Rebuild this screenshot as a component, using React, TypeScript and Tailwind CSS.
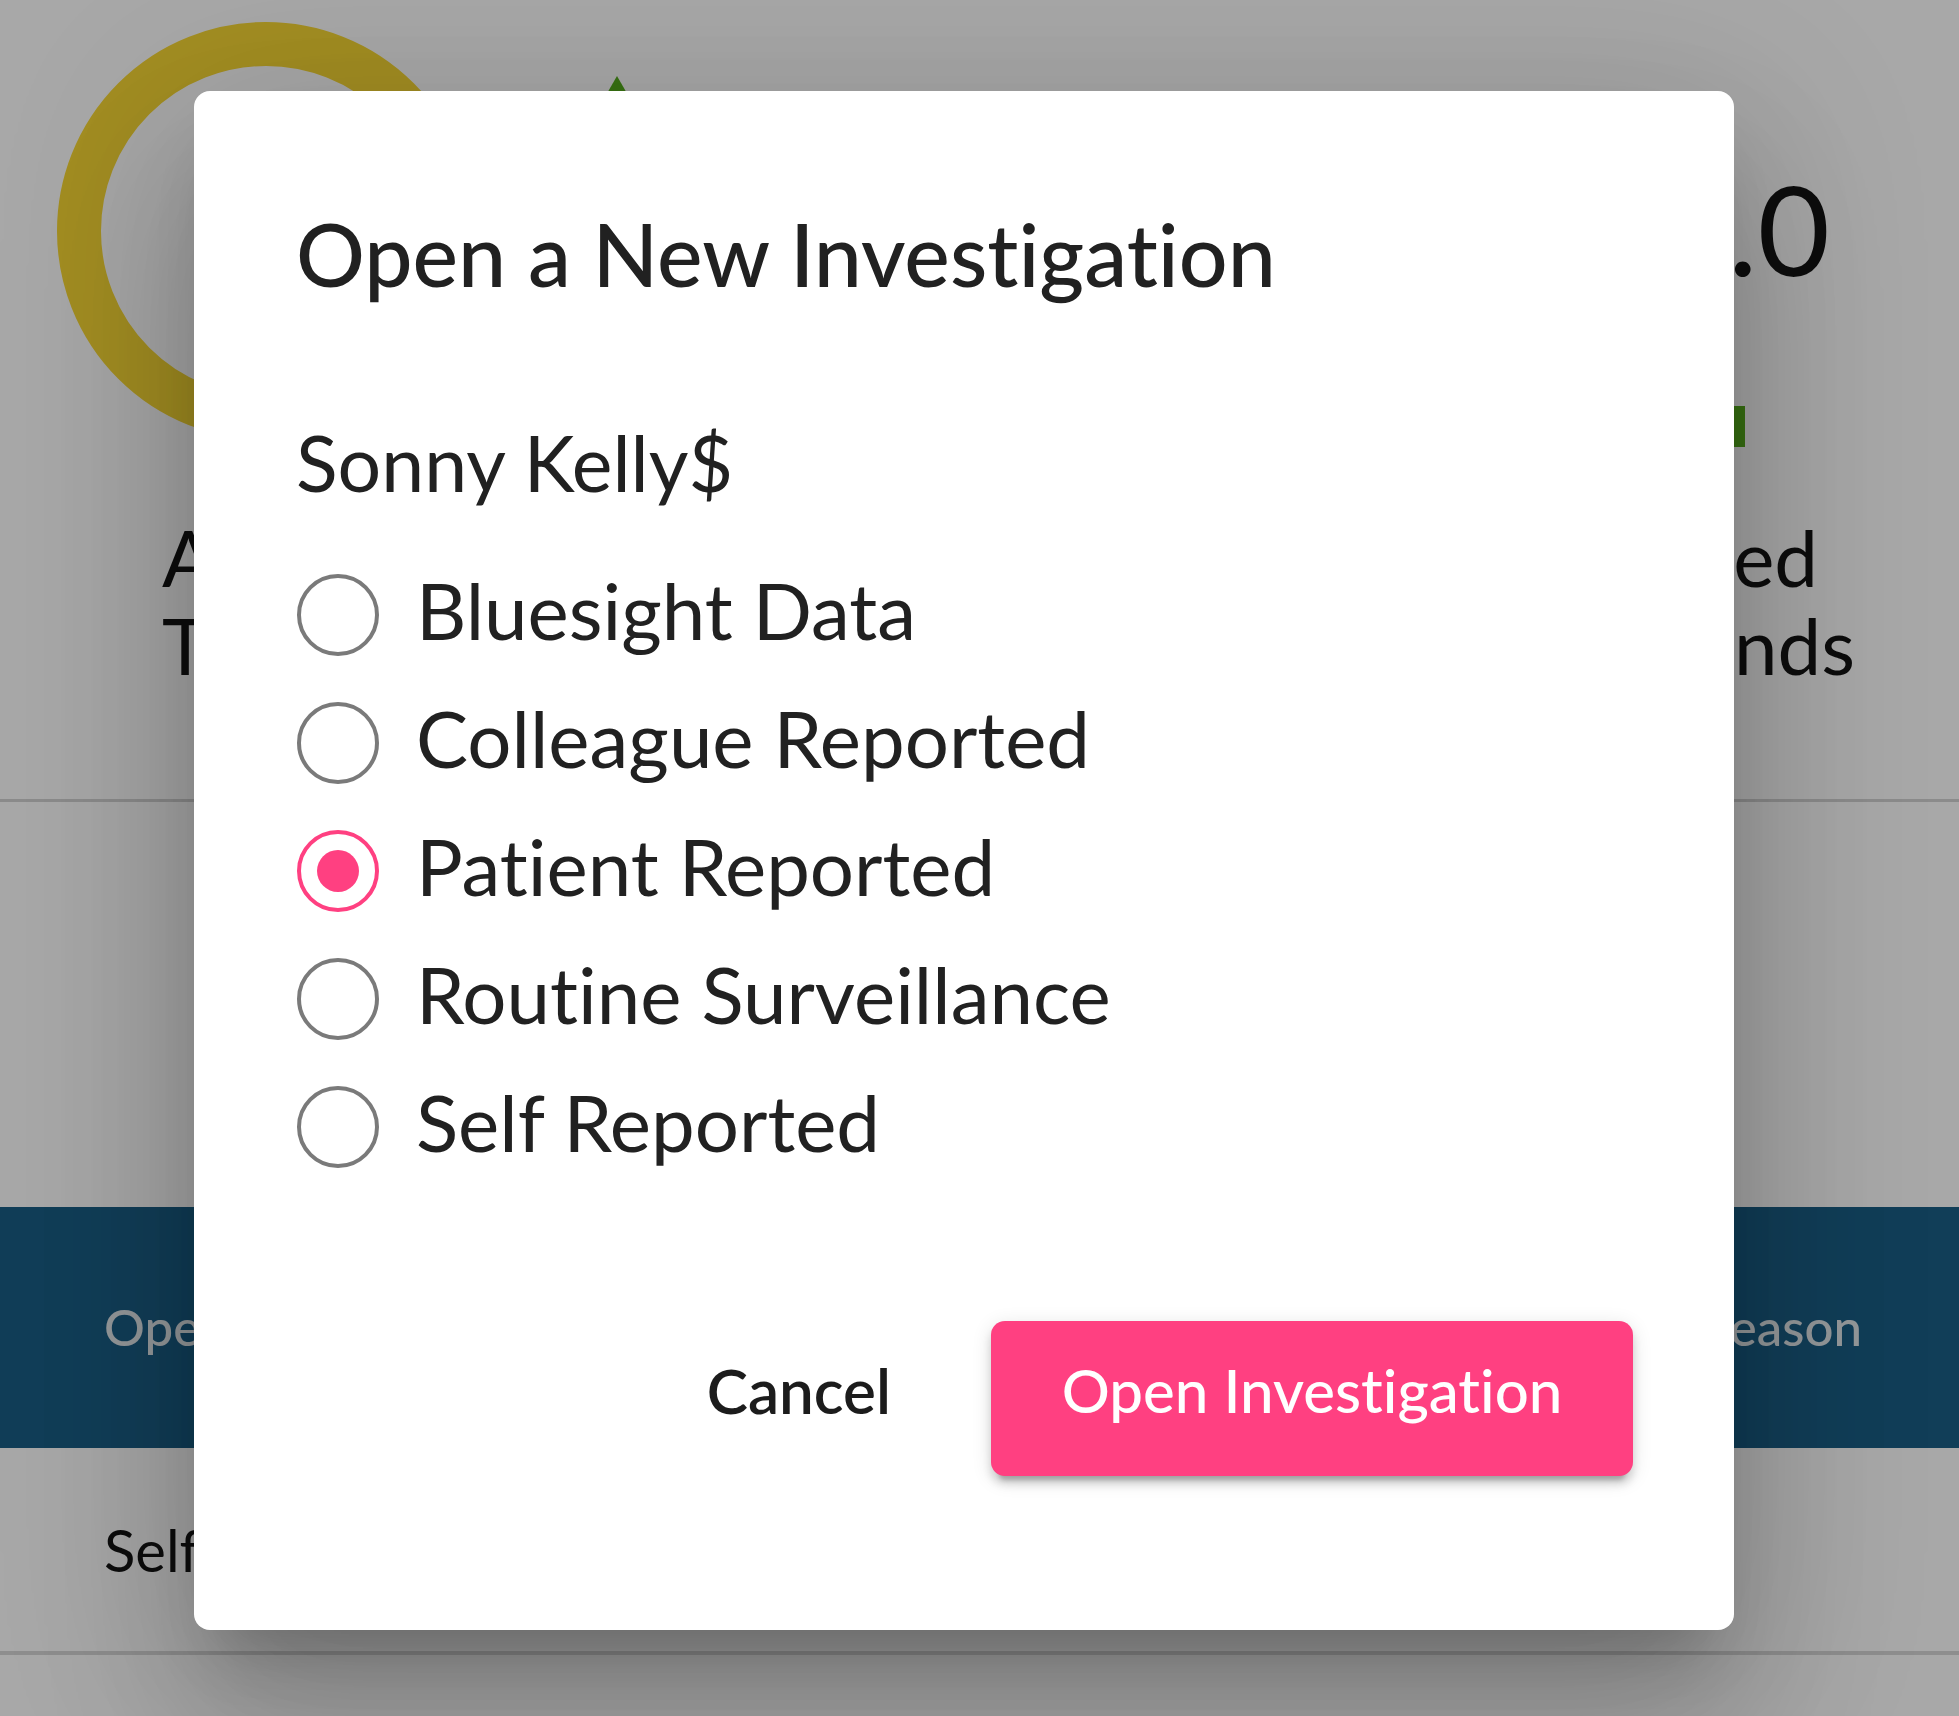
import React from "react";

const options = [
  { label: "Bluesight Data", checked: false },
  { label: "Colleague Reported", checked: false },
  { label: "Patient Reported", checked: true },
  { label: "Routine Surveillance", checked: false },
  { label: "Self Reported", checked: false },
];

function Radio({ checked }: { checked: boolean }) {
  return (
    <span
      className={
        checked
          ? "ml-[1px] w-[82px] h-[82px] shrink-0 rounded-full border-[4px] border-[#ff4081] flex items-center justify-center"
          : "ml-[1px] w-[82px] h-[82px] shrink-0 rounded-full border-[4px] border-[#7a7a7a] flex items-center justify-center"
      }
    >
      {checked ? <span className="w-[42px] h-[42px] rounded-full bg-[#ff4081]" /> : null}
    </span>
  );
}

export default function App() {
  return (
    <div className="relative w-[1959px] h-[1716px] overflow-hidden bg-white font-['Lato',sans-serif] [font-variant-ligatures:none] text-[#151515]">
      {/* underlying page */}
      <div className="flex flex-col h-full">
        <section className="h-[802px] shrink-0 border-b-[3px] border-[#d4d4d4] flex justify-between">
          <div className="flex">
            <div className="flex flex-col">
              <svg className="ml-[57px] mt-[22px]" width="418" height="418" viewBox="0 0 418 418">
                <circle cx="209" cy="209" r="187" fill="none" stroke="#f8d834" strokeWidth="44" />
              </svg>
              <div className="ml-[162px] mt-[73px] text-[78px] leading-[88px]">
                <div>Active</div>
                <div>Trends</div>
              </div>
            </div>
            <div className="ml-[127px] mt-[76px]">
              <svg width="30" height="26" viewBox="0 0 30 26">
                <polygon points="15,0 30,26 0,26" fill="#55ae1e" />
              </svg>
            </div>
          </div>
          <div className="flex flex-col items-end">
            <div className="mt-[166px] mr-[129px] text-[125px] leading-[125px]">4.0</div>
            <div className="mt-[115px] mr-[214px] w-[45px] h-[41px] bg-[#55ae1e]" />
            <div className="mt-[66px] mr-[141px] text-[78px] leading-[88px]">Resolved</div>
            <div className="mr-[104px] text-[78px] leading-[88px]">Trends</div>
          </div>
        </section>
        <div className="h-[405px] shrink-0" />
        <div className="h-[241px] shrink-0 bg-[#1a5e86] flex items-center justify-between pl-[104px] pr-[97px] text-[51px] font-medium text-[#e3e8ec]">
          <span>Open Date</span>
          <span>Reason</span>
        </div>
        <div className="h-[207px] shrink-0 border-b-[4px] border-[#d8d8d8] flex items-center pl-[104px] text-[58px]">
          Self Reported
        </div>
      </div>

      {/* backdrop */}
      <div className="absolute inset-0 bg-black/[0.34]" />

      {/* dialog */}
      <div className="absolute left-[194px] top-[91px] w-[1540px] bg-white rounded-[16px] shadow-[0_44px_60px_-28px_rgba(0,0,0,0.2),0_96px_152px_12px_rgba(0,0,0,0.14),0_36px_184px_32px_rgba(0,0,0,0.12)] pt-[120px] pb-[154px] pl-[102px] pr-[101px] text-[#212121]">
        <h2 className="text-[86px] leading-[86px] font-medium">Open a New Investigation</h2>
        <p className="mt-[127px] text-[77px] leading-[76px]">Sonny Kelly$</p>
        <div className="mt-[51px] flex flex-col">
          {options.map((o) => (
            <label key={o.label} className="h-[128px] flex items-center">
              <Radio checked={o.checked} />
              <span className="ml-[37px] pb-[10px] text-[78px] leading-[100px]">{o.label}</span>
            </label>
          ))}
        </div>
        <div className="mt-[130px] flex justify-end items-center">
          <button className="mr-[100px] pb-[18px] text-[62px] leading-[100px] font-semibold text-[#1c1c1c]">Cancel</button>
          <button className="w-[642px] h-[155px] pb-[18px] rounded-[14px] bg-[#ff4081] text-white text-[60px] font-medium shadow-[0_12px_4px_-8px_rgba(0,0,0,0.2),0_8px_8px_0_rgba(0,0,0,0.14),0_4px_20px_0_rgba(0,0,0,0.12)]">
            Open Investigation
          </button>
        </div>
      </div>
    </div>
  );
}
